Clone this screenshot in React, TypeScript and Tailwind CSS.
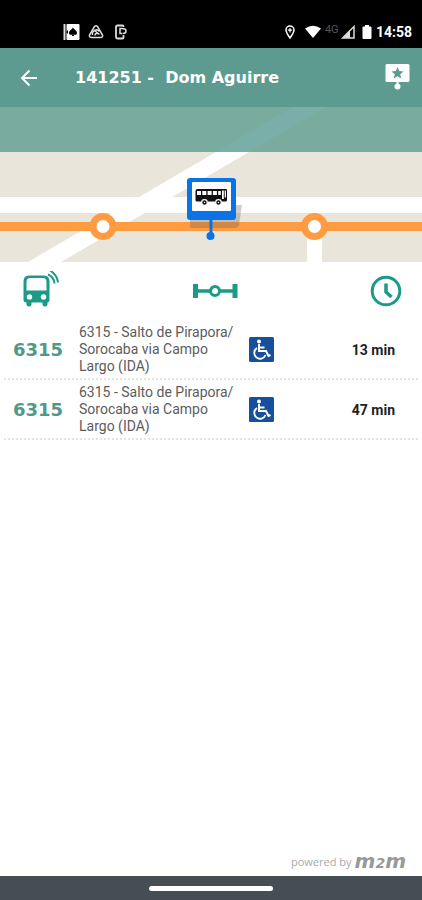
const departures = [
  { line: "6315", route: "6315 - Salto de Pirapora/ Sorocaba via Campo Largo (IDA)", minutes: 13 },
  { line: "6315", route: "6315 - Salto de Pirapora/ Sorocaba via Campo Largo (IDA)", minutes: 47 },
];

const StatusBar = () => {
  return (
    <div className="flex h-12 shrink-0 items-end justify-between bg-black pb-2 pl-[63px] pr-[10px] text-white">
      <div className="flex items-center gap-2">
        <svg width="17" height="16" viewBox="0 0 17 16">
          <rect x="0.5" y="0" width="2" height="16" rx="0.5" fill="#ddd" />
          <rect x="3.5" y="0" width="13" height="16" rx="1" fill="#fff" />
          <path d="M10 3.5C11 5.5 14 6.5 14 9c0 2-2.500 2.500-3.500 1l.7 2H8.800l.7-2C8.500 11.500 6 11 6 9c0-2.500 3-3.500 4-5.500z" fill="#000" />
          <path d="M3 8l2-2v4z" fill="#000" />
        </svg>
        <svg width="16" height="16" viewBox="0 0 16 16" fill="none" stroke="#ddd" strokeWidth="1.500">
          <path d="M6.500 2.500q1.500-1.500 3 0l5 8.500q.5 2.500-2 2.500h-9q-2.500 0-2-2.500z" />
          <path d="M4.500 11a4 4 0 0 1 7-3.500M7 11.500a2 2 0 0 1 3.500-1.500M6.500 6.500l5 4" />
        </svg>
        <svg width="16" height="16" viewBox="0 0 16 16" fill="none" stroke="#ddd" strokeWidth="1.800">
          <path d="M11.500 3V2.500q0-1-1-1h-5q-1.500 0-1.500 1.500v10q0 1.500 1.500 1.500h5q1 0 1-1V11" />
          <path d="M10.500 4.500H8v5h2.500M10 4.500q4 0 4 2.500t-3 2.500" strokeWidth="1.500" />
        </svg>
      </div>
      <div className="flex items-center">
        <svg width="12" height="16" viewBox="0 0 12 16" fill="none" stroke="#fff" strokeWidth="1.500">
          <path d="M6 14C3.500 10.500 2 8.500 2 6a4 4 0 0 1 8 0c0 2.500-1.500 4.500-4 8z" />
          <path d="M6 4v4.400M3.800 6.200h4.400" strokeWidth="1.200" />
        </svg>
        <svg className="ml-2" width="18" height="16" viewBox="0 0 18 16">
          <path d="M1 4.500Q9-1 17 4.500L9 14z" fill="#fff" />
        </svg>
        <span className="-mt-1 ml-[3px] w-4 font-['Roboto',sans-serif] text-[11px] leading-4 text-[#555]">4G</span>
        <svg width="15" height="16" viewBox="0 0 15 16">
          <path d="M13 2.500V14H1.500z" fill="none" stroke="#ddd" strokeWidth="1.500" />
          <path d="M9 6v8H2z" fill="#ddd" />
        </svg>
        <svg className="ml-[6px]" width="10" height="16" viewBox="0 0 10 16">
          <path d="M3 1h4v1.500h1.500q1 0 1 1V14q0 1-1 1h-7q-1 0-1-1V3.500q0-1 1-1H3z" fill="#fff" />
        </svg>
        <span className="ml-1 font-['Roboto',sans-serif] text-[14px] font-bold leading-4">14:58</span>
      </div>
    </div>
  );
};

const Header = () => {
  return (
    <header className="flex h-[59px] shrink-0 items-center bg-[#5d9b90] pl-5 pr-3 text-white">
      <button type="button" aria-label="Voltar" className="cursor-pointer">
        <svg width="18" height="18" viewBox="0 0 18 18" fill="none" stroke="#fff" strokeWidth="2">
          <path d="M17 9H2.500M9.500 1.500L2 9l7.500 7.500" />
        </svg>
      </button>
      <h1 className="ml-[37px] flex-1 whitespace-pre font-['DejaVu_Sans',sans-serif] text-[16px] font-bold leading-5">141251 -  Dom Aguirre</h1>
      <button type="button" aria-label="Favoritar parada" className="cursor-pointer">
        <svg width="25" height="27" viewBox="0 0 25 27">
          <rect x="0.500" y="0" width="24" height="18" rx="1.500" fill="#fff" />
          <path d="M12.500 17v5" stroke="#fff" strokeWidth="2" />
          <circle cx="12.500" cy="22.500" r="3" fill="#fff" />
          <path d="M12.500 3l1.700 4.100 4.400.3-3.400 2.800 1.100 4.300-3.800-2.300-3.800 2.300 1.100-4.300-3.400-2.800 4.400-.3z" fill="#5d9b90" />
        </svg>
      </button>
    </header>
  );
};

const StopMap = () => {
  return (
    <svg className="block h-[155px] w-full shrink-0" viewBox="0 107 422 155" preserveAspectRatio="xMidYMid slice">
      <rect x="0" y="107" width="422" height="155" fill="#e9e5db" />
      <rect x="0" y="197" width="422" height="16" fill="#fff" />
      <path d="M28 262L216 152h33L61 262z" fill="#fff" />
      <rect x="307" y="226" width="15" height="36" fill="#fff" />
      <rect x="0" y="107" width="422" height="45" fill="#7aab9f" />
      <path d="M216 152L293 107h33L249 152z" fill="#7aafa9" />
      <rect x="0" y="222" width="422" height="9" fill="#ff9c42" />
      <circle cx="103" cy="226.500" r="10" fill="#fff" stroke="#ff9c42" strokeWidth="7" />
      <circle cx="314.500" cy="226.500" r="10" fill="#fff" stroke="#ff9c42" strokeWidth="7" />
      <path d="M190 219h46v-14h6l-3 20q-1 3-4 3h-43q-3 0-2-3z" fill="#6b5a4a" opacity="0.300" />
      <path d="M211 218v18" stroke="#0a74e6" strokeWidth="3" />
      <circle cx="210.500" cy="236" r="4" fill="#0a74e6" />
      <rect x="187" y="178" width="49" height="42" rx="3" fill="#0a74e6" />
      <rect x="192" y="182" width="39" height="29" rx="1" fill="#fff" />
      <path d="M197.500 189H226q1 0 1 1v10q0 1.500-1.500 1.500H197q-1.500 0-1.500-1.500v-9q0-2 2-2z" fill="#111" />
      <path d="M197 191h4v4h-4zM202.300 191h4v4h-4zM207.600 191h4v4h-4zM212.900 191h4v4h-4zM218.200 191h2.600v4h-2.600zM222 190.500h1.800v8.500H222zM224.700 190.500h1.300v7h-1.300z" fill="#fff" />
      <circle cx="204.500" cy="202.500" r="2.800" fill="#111" stroke="#fff" strokeWidth="1.200" />
      <circle cx="218.500" cy="202.500" r="2.800" fill="#111" stroke="#fff" strokeWidth="1.200" />
      <circle cx="204.500" cy="202.500" r="0.700" fill="#fff" />
      <circle cx="218.500" cy="202.500" r="0.700" fill="#fff" />
    </svg>
  );
};

const ColumnIcons = () => {
  return (
    <div className="flex h-[58px] shrink-0 items-center justify-between pl-[23px] pr-5">
      <svg width="36" height="40" viewBox="0 0 36 40">
        <path d="M6 4.500h15q5.500 0 5.500 6V29q0 2-2 2.500V33q0 2.500-2.500 2.500T19.500 33v-1.500h-11V33Q8.500 35.500 6 35.500T3.500 33v-1.500Q.5 31 .5 29V10.500q0-6 5.500-6z" fill="#1b9a88" />
        <path d="M7 7h13q3.500 0 3.500 4v8.500h-20V11q0-4 3.500-4z" fill="#fff" />
        <circle cx="6.500" cy="26" r="2.700" fill="#fff" />
        <circle cx="20.500" cy="26" r="2.700" fill="#fff" />
        <path d="M25 3.500q6 2.500 6.500 9M27-.5q7 4 8 12" fill="none" stroke="#1b9a88" strokeWidth="2" />
      </svg>
      <svg width="46" height="16" viewBox="0 0 46 16" fill="none" stroke="#1b9a88">
        <path d="M3.500 1v14M43 1v14" strokeWidth="5" />
        <path d="M4 8h14M28 8h14" strokeWidth="3.500" />
        <circle cx="23" cy="8" r="4.500" strokeWidth="3" />
      </svg>
      <svg width="32" height="32" viewBox="0 0 32 32" fill="none" stroke="#1b9a88">
        <circle cx="16" cy="16" r="13.800" strokeWidth="3" />
        <path d="M16 8.500V17l5.500 5" strokeWidth="3.500" />
      </svg>
    </div>
  );
};

const WheelchairIcon = () => {
  return (
    <svg width="25" height="25" viewBox="0 0 25 25" role="img" aria-label="Acessível">
      <rect width="25" height="25" rx="1.500" fill="#174f9c" />
      <circle cx="10" cy="4.500" r="2" fill="#fff" />
      <path d="M10 7v7h7l2.500 5 2-1M10.500 10.500h5" fill="none" stroke="#fff" strokeWidth="2" />
      <path d="M8 11a5.800 5.800 0 1 0 8.500 7" fill="none" stroke="#fff" strokeWidth="1.800" />
    </svg>
  );
};

const App = () => {
  return (
    <div className="flex min-h-screen flex-col bg-white">
      <StatusBar />
      <Header />
      <StopMap />
      <main className="flex flex-1 flex-col">
        <ColumnIcons />
        <ul className="px-1">
          {departures.map((departure) => (
            <li key={departure.minutes} className="flex items-center border-b-2 border-dotted border-[#e4e4e4] pb-[3px] pl-[9px] pr-[23px] pt-1">
              <span className="w-[66px] font-['DejaVu_Sans',sans-serif] text-[18px] font-bold leading-5 text-[#4f9a86]">{departure.line}</span>
              <p className="mr-[10px] w-40 font-['Roboto',sans-serif] text-[14px] leading-[17px] text-[#5c5c5c]">{departure.route}</p>
              <WheelchairIcon />
              <span className="ml-auto font-['Roboto',sans-serif] text-[14px] font-bold leading-5 text-[#222]">{departure.minutes} min</span>
            </li>
          ))}
        </ul>
        <footer className="mt-auto flex items-center justify-end gap-[3px] pb-[5px] pr-4">
          <span className="font-['Open_Sans',sans-serif] text-[11px] leading-4 text-[#aaa]">powered by</span>
          <span className="font-['DejaVu_Sans',sans-serif] text-[20px] font-bold italic leading-4 text-[#999]">
            m<span className="text-[14px]">2</span>m
          </span>
        </footer>
      </main>
      <nav className="flex h-6 shrink-0 items-center justify-center bg-[#454e52]">
        <button type="button" aria-label="Início" className="h-[5px] w-[124px] cursor-pointer rounded-full bg-white"></button>
      </nav>
    </div>
  );
};

export default App;
